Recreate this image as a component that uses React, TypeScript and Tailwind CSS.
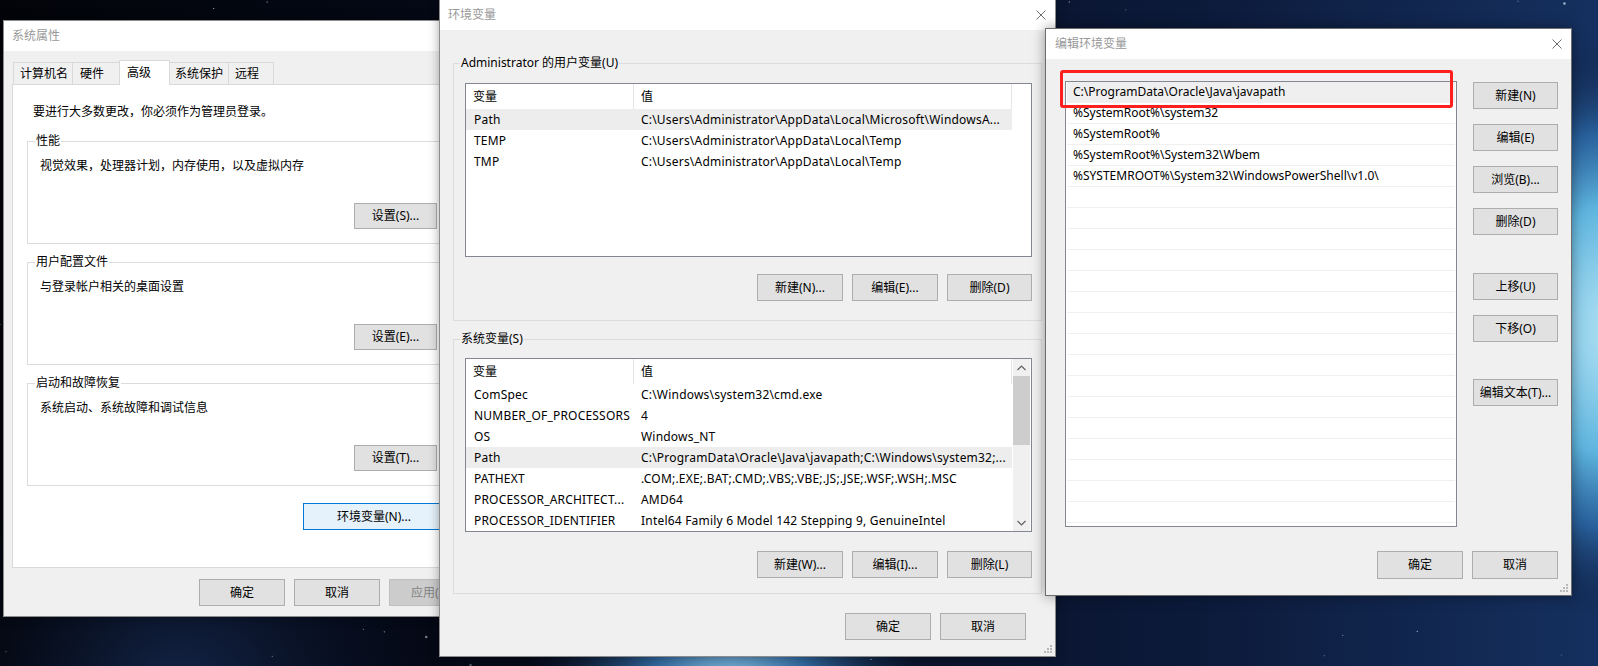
import React from 'react';

const FONT = "font-['Noto_Sans','Noto_Sans_CJK_SC',sans-serif]";

function Btn({ children, className = '' }: { children: React.ReactNode; className?: string }) {
  return (
    <div className={`flex shrink-0 items-center justify-center border border-[#adadad] bg-[#e1e1e1] ${className}`}>
      {children}
    </div>
  );
}

function CloseX() {
  return (
    <svg width="10" height="10" viewBox="0 0 10 10">
      <path d="M0.5 0.5L9.5 9.5M9.5 0.5L0.5 9.5" stroke="#6f6f6f" strokeWidth="1" />
    </svg>
  );
}

function Grip() {
  return (
    <svg width="9" height="9" viewBox="0 0 9 9">
      {[
        [6, 0],
        [3, 3],
        [6, 3],
        [0, 6],
        [3, 6],
        [6, 6],
      ].map(([x, y]) => (
        <rect key={`${x}-${y}`} x={x} y={y} width="2" height="2" fill="#b8b8b8" />
      ))}
    </svg>
  );
}

function Chevron({ up }: { up?: boolean }) {
  return (
    <svg width="9" height="6" viewBox="0 0 9 6">
      <path d={up ? 'M0.5 5L4.5 1L8.5 5' : 'M0.5 1L4.5 5L8.5 1'} fill="none" stroke="#606060" strokeWidth="1.2" />
    </svg>
  );
}

// wallpaper: dark starfield with a blue nebula
function Wallpaper() {
  let seed = 7;
  const rnd = () => {
    seed = (seed * 9301 + 49297) % 233280;
    return seed / 233280;
  };
  const stars = Array.from({ length: 160 }, () => ({
    x: rnd() * 1598,
    y: rnd() * 666,
    r: rnd() < 0.12 ? 1.3 : 0.6,
    o: 0.3 + rnd() * 0.6,
  }));
  return (
    <svg className="absolute inset-0" width="1598" height="666" viewBox="0 0 1598 666">
      <defs>
        <linearGradient id="base" x1="0" y1="0" x2="1" y2="0">
          <stop offset="0" stopColor="#020409" />
          <stop offset="0.45" stopColor="#060c1e" />
          <stop offset="0.75" stopColor="#0c1a3a" />
          <stop offset="1" stopColor="#15305f" />
        </linearGradient>
        <radialGradient id="neb1" cx="1640" cy="330" r="290" gradientUnits="userSpaceOnUse">
          <stop offset="0" stopColor="#c4ecf8" />
          <stop offset="0.45" stopColor="#5eb4de" />
          <stop offset="0.7" stopColor="#2c6aa8" stopOpacity="0.8" />
          <stop offset="1" stopColor="#0b1836" stopOpacity="0" />
        </radialGradient>
        <radialGradient id="neb2" cx="730" cy="705" r="210" gradientUnits="userSpaceOnUse">
          <stop offset="0" stopColor="#a4dcf2" />
          <stop offset="0.4" stopColor="#3a7cb8" stopOpacity="0.8" />
          <stop offset="1" stopColor="#0b1836" stopOpacity="0" />
        </radialGradient>
        <radialGradient id="neb3" cx="180" cy="700" r="260" gradientUnits="userSpaceOnUse">
          <stop offset="0" stopColor="#1d3566" stopOpacity="0.7" />
          <stop offset="1" stopColor="#0b1836" stopOpacity="0" />
        </radialGradient>
      </defs>
      <rect width="1598" height="666" fill="url(#base)" />
      <rect width="1598" height="666" fill="url(#neb3)" />
      <rect width="1598" height="666" fill="url(#neb2)" />
      <rect width="1598" height="666" fill="url(#neb1)" />
      {stars.map((s, i) => (
        <circle key={i} cx={s.x} cy={s.y} r={s.r} fill="#dbeeff" opacity={s.o} />
      ))}
    </svg>
  );
}

function Group1({ title, text, button, first }: { title: string; text: string; button: string; first?: boolean }) {
  return (
    <fieldset className={`border border-[#dcdcdc] pb-[14px] pl-[12px] pr-[7px] ${first ? 'mt-[14px]' : 'mt-[11px]'}`}>
      <legend className="-ml-[5px] px-[1px] leading-[14px]">{title}</legend>
      <div className="mt-[10px] leading-[16px]">{text}</div>
      <div className="mt-[29px] flex justify-end">
        <Btn className="h-[26px] w-[83px]">{button}</Btn>
      </div>
    </fieldset>
  );
}

function SystemProps() {
  return (
    <div className="absolute left-[3px] top-[20px] flex h-[597px] w-[470px] flex-col border border-[#8c8c8c] bg-[#f0f0f0] shadow-[0_0_10px_rgba(0,0,0,0.35)]">
      <div className="flex h-[30px] shrink-0 items-center bg-white pl-[8px] text-[#999999]">系统属性</div>
      <div className="flex flex-col pl-[8px] pt-[9px]">
        <div className="relative z-10 flex h-[24px] items-end pl-[1px]">
          <div className="flex h-[22px] w-[59px] items-center border-l border-t border-[#d9d9d9] pl-[6px]">计算机名</div>
          <div className="flex h-[22px] w-[47px] items-center border-l border-t border-[#d9d9d9] pl-[7px]">硬件</div>
          <div className="-mb-[1px] flex h-[25px] w-[51px] items-center border-x border-t border-[#d9d9d9] bg-white pl-[7px]">高级</div>
          <div className="flex h-[22px] w-[58px] items-center border-t border-[#d9d9d9] pl-[5px]">系统保护</div>
          <div className="flex h-[22px] w-[46px] items-center border-x border-t border-[#d9d9d9] pl-[6px]">远程</div>
        </div>
        <div className="h-[484px] w-[440px] border border-[#d9d9d9] bg-white">
          <p className="ml-[20px] mt-[19px] leading-[16px]">要进行大多数更改，你必须作为管理员登录。</p>
          <div className="ml-[14px] flex w-[418px] flex-col">
            <Group1 first title="性能" text="视觉效果，处理器计划，内存使用，以及虚拟内存" button="设置(S)..." />
            <Group1 title="用户配置文件" text="与登录帐户相关的桌面设置" button="设置(E)..." />
            <Group1 title="启动和故障恢复" text="系统启动、系统故障和调试信息" button="设置(T)..." />
            <div className="mt-[17px] flex justify-end">
              <div className="flex h-[27px] w-[142px] items-center justify-center border border-[#0078d7] bg-[#e5f1fb]">环境变量(N)...</div>
            </div>
          </div>
        </div>
        <div className="mt-[11px] flex gap-[9px] pl-[187px]">
          <Btn className="h-[27px] w-[86px]">确定</Btn>
          <Btn className="h-[27px] w-[86px]">取消</Btn>
          <div className="flex h-[27px] w-[86px] items-center justify-center border border-[#bfbfbf] bg-[#cccccc] text-[#838383]">应用(A)</div>
        </div>
      </div>
    </div>
  );
}

type Row = [string, string];

function VarTable({ rows, sel, scroll, className = '' }: { rows: Row[]; sel: number; scroll?: boolean; className?: string }) {
  return (
    <div className={`flex h-[174px] border border-[#828790] bg-white ${className}`}>
      <div className="flex w-[546px] flex-col overflow-hidden">
        <div className="flex h-[25px] shrink-0">
          <div className="flex w-[168px] items-center border-r border-[#e5e5e5] pl-[7px]">变量</div>
          <div className="flex flex-1 items-center border-r border-[#e5e5e5] pl-[7px]">值</div>
        </div>
        {rows.map(([k, v], i) => (
          <div key={k} className={`flex h-[21px] shrink-0 items-center tracking-[0.2px] ${i === sel ? 'bg-[#ededed]' : ''}`}>
            <div className="w-[168px] shrink-0 overflow-hidden whitespace-nowrap pl-[8px]">{k}</div>
            <div className="flex-1 overflow-hidden whitespace-nowrap pl-[7px]">{v}</div>
          </div>
        ))}
      </div>
      {scroll && (
        <div className="ml-[1px] flex w-[17px] flex-col bg-[#f0f0f0]">
          <div className="flex h-[17px] items-center justify-center">
            <Chevron up />
          </div>
          <div className="h-[69px] bg-[#cdcdcd]" />
          <div className="flex-1" />
          <div className="flex h-[17px] items-center justify-center">
            <Chevron />
          </div>
        </div>
      )}
    </div>
  );
}

const userVars: Row[] = [
  ['Path', 'C:\\Users\\Administrator\\AppData\\Local\\Microsoft\\WindowsA...'],
  ['TEMP', 'C:\\Users\\Administrator\\AppData\\Local\\Temp'],
  ['TMP', 'C:\\Users\\Administrator\\AppData\\Local\\Temp'],
];

const sysVars: Row[] = [
  ['ComSpec', 'C:\\Windows\\system32\\cmd.exe'],
  ['NUMBER_OF_PROCESSORS', '4'],
  ['OS', 'Windows_NT'],
  ['Path', 'C:\\ProgramData\\Oracle\\Java\\javapath;C:\\Windows\\system32;...'],
  ['PATHEXT', '.COM;.EXE;.BAT;.CMD;.VBS;.VBE;.JS;.JSE;.WSF;.WSH;.MSC'],
  ['PROCESSOR_ARCHITECT...', 'AMD64'],
  ['PROCESSOR_IDENTIFIER', 'Intel64 Family 6 Model 142 Stepping 9, GenuineIntel'],
];

function EnvVars() {
  return (
    <div className="absolute left-[439px] top-[-1px] flex h-[658px] w-[617px] flex-col border border-[#8c8c8c] bg-[#f0f0f0] shadow-[0_0_10px_rgba(0,0,0,0.35)]">
      <div className="flex h-[30px] shrink-0 items-center justify-between bg-white pl-[8px] text-[#999999]">
        <span>环境变量</span>
        <div className="flex w-[28px] items-center justify-center">
          <CloseX />
        </div>
      </div>
      <div className="flex flex-col px-[13px]">
        <fieldset className="mt-[26px] border border-[#dcdcdc] pb-[19px] pl-[11px] pr-[9px]">
          <legend className="-ml-[5px] px-[1px] leading-[14px]">Administrator 的用户变量(U)</legend>
          <VarTable className="mt-[13px]" rows={userVars} sel={0} />
          <div className="mt-[17px] flex justify-end gap-[9px]">
            <Btn className="h-[27px] w-[86px]">新建(N)...</Btn>
            <Btn className="h-[27px] w-[86px]">编辑(E)...</Btn>
            <Btn className="h-[27px] w-[85px]">删除(D)</Btn>
          </div>
        </fieldset>
        <fieldset className="mt-[11px] border border-[#dcdcdc] pb-[15px] pl-[11px] pr-[9px]">
          <legend className="-ml-[5px] px-[1px] leading-[14px]">系统变量(S)</legend>
          <VarTable className="mt-[12px]" rows={sysVars} sel={3} scroll />
          <div className="mt-[19px] flex justify-end gap-[9px]">
            <Btn className="h-[27px] w-[86px]">新建(W)...</Btn>
            <Btn className="h-[27px] w-[86px]">编辑(I)...</Btn>
            <Btn className="h-[27px] w-[85px]">删除(L)</Btn>
          </div>
        </fieldset>
        <div className="mt-[19px] flex justify-end gap-[9px] pr-[16px]">
          <Btn className="h-[27px] w-[86px]">确定</Btn>
          <Btn className="h-[27px] w-[86px]">取消</Btn>
        </div>
      </div>
      <div className="absolute bottom-[2px] right-[2px] flex">
        <Grip />
      </div>
    </div>
  );
}

const pathEntries = [
  'C:\\ProgramData\\Oracle\\Java\\javapath',
  '%SystemRoot%\\system32',
  '%SystemRoot%',
  '%SystemRoot%\\System32\\Wbem',
  '%SYSTEMROOT%\\System32\\WindowsPowerShell\\v1.0\\',
];

function EditEnv() {
  const rows = Array.from({ length: 22 }, (_, i) => pathEntries[i] ?? '');
  return (
    <div className="absolute left-[1045px] top-[28px] flex h-[568px] w-[527px] flex-col border border-[#6e6e6e] bg-[#f0f0f0] shadow-[0_0_12px_rgba(0,0,0,0.4)]">
      <div className="flex h-[30px] shrink-0 items-center justify-between bg-white pl-[9px] text-[#999999]">
        <span>编辑环境变量</span>
        <div className="flex w-[28px] items-center justify-center">
          <CloseX />
        </div>
      </div>
      <div className="flex pl-[19px] pt-[22px]">
        <div className="flex h-[446px] w-[392px] flex-col overflow-hidden border border-[#828790] bg-white">
          {rows.map((r, i) => (
            <div
              key={i}
              className={`mx-[1px] flex h-[21px] shrink-0 items-center border-b border-[#f0f0f0] pl-[6px] whitespace-nowrap ${i === 0 ? 'bg-[#efefef]' : ''}`}
            >
              {r}
            </div>
          ))}
        </div>
        <div className="ml-[16px] flex flex-col pt-[1px]">
          <Btn className="h-[27px] w-[85px]">新建(N)</Btn>
          <Btn className="mt-[15px] h-[27px] w-[85px]">编辑(E)</Btn>
          <Btn className="mt-[15px] h-[27px] w-[85px]">浏览(B)...</Btn>
          <Btn className="mt-[15px] h-[27px] w-[85px]">删除(D)</Btn>
          <Btn className="mt-[38px] h-[27px] w-[85px]">上移(U)</Btn>
          <Btn className="mt-[15px] h-[27px] w-[85px]">下移(O)</Btn>
          <Btn className="mt-[37px] h-[27px] w-[85px]">编辑文本(T)...</Btn>
        </div>
      </div>
      <div className="mt-[24px] flex justify-end gap-[9px] pr-[13px]">
        <Btn className="h-[28px] w-[86px]">确定</Btn>
        <Btn className="h-[28px] w-[86px]">取消</Btn>
      </div>
      {/* red highlight drawn over the first path entry */}
      <div className="absolute left-[14px] top-[41px] h-[38px] w-[393px] rounded-[3px] border-[3px] border-[#ff1f1f]" />
      <div className="absolute bottom-[2px] right-[2px] flex">
        <Grip />
      </div>
    </div>
  );
}

export default function App() {
  return (
    <div className={`relative h-[666px] w-[1598px] overflow-hidden text-[12px] text-black ${FONT}`}>
      <Wallpaper />
      <SystemProps />
      <EnvVars />
      <EditEnv />
    </div>
  );
}
